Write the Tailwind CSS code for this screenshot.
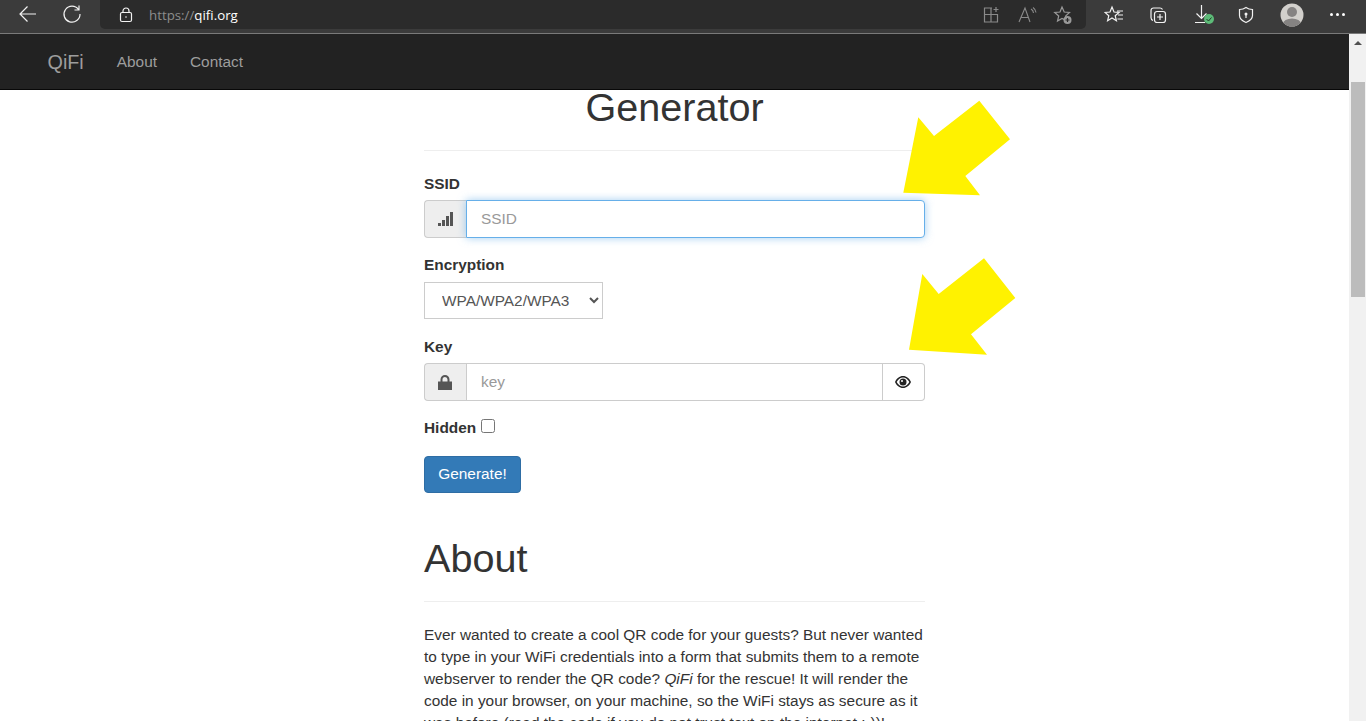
<!DOCTYPE html>
<html lang="en">
<head>
  <meta charset="UTF-8">
  <title>QiFi</title>
  <script src="https://cdn.jsdelivr.net/npm/@tailwindcss/browser@4"></script>
</head>
<body class="h-[721px] w-[1366px] overflow-hidden bg-white font-['Liberation_Sans',Arial,sans-serif] text-[15.4px] leading-[22px] text-[#333]">
  <!-- Browser toolbar -->
  <div class="flex h-[34px] border-b border-[#7a7a7a] bg-[#3b3b3b]">
    <div class="flex h-[33px] w-[100px] shrink-0 items-start">
      <svg class="ml-[18px] mt-[4px] h-[20px] w-[20px]" viewBox="0 0 20 20" fill="none" stroke="#f2f2f2" stroke-width="1.2"><path d="M18 10H2M9.500 2.500L2 10l7.500 7.500"/></svg>
      <svg class="ml-[24px] mt-[4px] h-[20px] w-[20px]" viewBox="0 0 20 20" fill="none" stroke="#f2f2f2" stroke-width="1.200"><path d="M16.500 5.500A8 8 0 1 0 18 10M17 1.500v4.500h-4.500"/></svg>
    </div>
    <!-- Address bar -->
    <div class="flex h-[29px] w-[986px] shrink-0 items-center rounded-b-[5px] bg-[#2b2b2b]">
      <svg class="ml-[18px] h-[16px] w-[16px]" viewBox="0 0 16 16" fill="none" stroke="#f2f2f2" stroke-width="1.200"><rect x="2.500" y="5.500" width="11" height="9" rx="1.500"/><path d="M5 5.500V4a3 3 0 0 1 6 0v1.500"/><circle cx="8" cy="10" r=".8" fill="#f2f2f2" stroke="none"/></svg>
      <span class="ml-[15px] font-['Open_Sans',sans-serif] text-[13.300px] text-[#8d8d8d]">https://<span class="text-white">qifi.org</span></span>
      <div class="ml-auto mr-[13px] flex items-center gap-[16px]">
        <svg class="h-[20px] w-[20px]" viewBox="0 0 20 20" fill="none" stroke="#8a8a8a" stroke-width="1.200"><path d="M11 3H3.500v14h13V9.500H3.500M10 3v14M15 2v5M12.500 4.500h5"/></svg>
        <svg class="h-[20px] w-[20px]" viewBox="0 0 20 20" fill="none" stroke="#8a8a8a" stroke-width="1.100"><path d="M2 17L8 3l5 14M4 12.500h7.500M14 4a5 5 0 0 1 2.500 4M16 2.500a7 7 0 0 1 3 5"/></svg>
        <svg class="h-[20px] w-[20px]" viewBox="0 0 20 20" fill="none" stroke="#9a9a9a" stroke-width="1.200"><path d="M9 2l2.200 5 5.300.5-4 3.600 1 4.500L9 13.500l-4.500 2.600 1.200-5.100-4-3.500 5.300-.5z"/><circle cx="14.500" cy="15" r="4" fill="#9a9a9a" stroke="none"/><path d="M14.500 13v4M12.500 15h4" stroke="#2b2b2b"/></svg>
      </div>
    </div>
    <div class="flex h-[29px] flex-1 items-center">
      <svg class="ml-[18px] h-[20px] w-[20px]" viewBox="0 0 20 20" fill="none" stroke="#f2f2f2" stroke-width="1.200"><path d="M8 2l2 5 5 .4-3.800 3.300 1.200 5L8 13l-4.400 2.700 1.200-5L1 7.400 6 7zM13 6h6M14 10h5M13.500 14H19"/></svg>
      <svg class="ml-[24px] h-[20px] w-[20px]" viewBox="0 0 20 20" fill="none" stroke="#f2f2f2" stroke-width="1.200"><path d="M5 15.500c-1.500-.5-2-1.500-2-3V5.500c0-1.500 1-2.500 2.500-2.500H12c1 0 2 .5 2.500 1.500"/><rect x="6.500" y="6.500" width="11" height="11" rx="2.500"/><path d="M12 9v6M9 12h6"/></svg>
      <div class="relative ml-[26px] h-[22px] w-[20px]">
        <svg class="h-[22px] w-[20px]" viewBox="0 0 20 22" fill="none" stroke="#f2f2f2" stroke-width="1.200"><path d="M7.500 1v13M2.500 9.500l5 5 5-5M1 18.500h10"/></svg>
        <span class="absolute left-[10px] top-[10px] flex h-[10px] w-[10px] items-center justify-center rounded-full bg-[#5dbb78]">
          <svg class="h-[8px] w-[8px]" viewBox="0 0 8 8" fill="none" stroke="#1f3b28" stroke-width="1"><path d="M1.500 4l2 2 3-3.500"/></svg>
        </span>
      </div>
      <svg class="ml-[22px] h-[20px] w-[20px]" viewBox="0 0 20 20" fill="none" stroke="#f2f2f2" stroke-width="1.200"><path d="M10 2.500c2 1.500 4 2 6.500 2v6c0 3.500-3 5.500-6.500 7-3.500-1.500-6.500-3.500-6.500-7v-6c2.500 0 4.500-.5 6.500-2z"/><circle cx="10" cy="9" r="1.500" fill="#f2f2f2" stroke="none"/><path d="M10 10v3"/></svg>
      <svg class="ml-[24px] h-[24px] w-[24px]" viewBox="0 0 24 24"><clipPath id="avatar"><circle cx="12" cy="12" r="11.500"/></clipPath><g clip-path="url(#avatar)"><rect width="24" height="24" fill="#d2d0cc"/><circle cx="12" cy="9" r="5" fill="#858382"/><ellipse cx="12" cy="21" rx="9" ry="5.500" fill="#858382"/></g></svg>
      <div class="ml-[26px] flex gap-[3px]">
        <span class="h-[3px] w-[3px] rounded-full bg-white"></span>
        <span class="h-[3px] w-[3px] rounded-full bg-white"></span>
        <span class="h-[3px] w-[3px] rounded-full bg-white"></span>
      </div>
    </div>
  </div>

  <div class="flex h-[687px]">
    <div class="w-[1349px] shrink-0 overflow-hidden">
      <!-- Navbar -->
      <nav class="flex h-[56px] items-center border-b border-[#080808] bg-[#222] pl-[47.500px] text-[#9d9d9d]">
        <span class="text-[19.800px]">QiFi</span>
        <span class="ml-[33px]">About</span>
        <span class="ml-[33px]">Contact</span>
      </nav>

      <main class="ml-[424px] w-[501px]">
        <h1 class="mt-[-5px] text-center text-[39.600px] leading-[44px]">Generator</h1>
        <hr class="mt-[21px] border-[#eee]">

        <label class="mt-[22px] block font-bold">SSID</label>
        <div class="mt-[5px] flex h-[38px]">
          <div class="flex w-[42px] items-center justify-center rounded-l-[4px] border border-r-0 border-[#ccc] bg-[#eee]">
            <svg class="h-[14px] w-[15px]" viewBox="0 0 15 14" fill="#555"><rect x="0" y="11" width="3" height="3"/><rect x="4" y="8" width="3" height="6"/><rect x="8" y="4" width="3" height="10"/><rect x="12" y="0" width="3" height="14"/></svg>
          </div>
          <input placeholder="SSID" class="min-w-0 flex-1 rounded-r-[4px] border border-[#66afe9] bg-white px-[14px] shadow-[0_0_8px_rgba(102,175,233,0.6)] outline-none placeholder:text-[#999]">
        </div>

        <label class="mt-[16px] block font-bold">Encryption</label>
        <select class="mt-[6px] block h-[37px] w-[179px] border border-[#ccc] bg-white pl-[13px] text-[#555] outline-none">
          <option>WPA/WPA2/WPA3</option>
        </select>

        <label class="mt-[17px] block font-bold">Key</label>
        <div class="mt-[5px] flex h-[38px]">
          <div class="flex w-[42px] items-center justify-center rounded-l-[4px] border border-r-0 border-[#ccc] bg-[#eee] pr-[1px]">
            <svg class="h-[15px] w-[14px]" viewBox="0 0 14 15" fill="#555"><path d="M2.500 6.500V4.500a4.500 4.500 0 0 1 9 0v2H14V15H0V6.500zM4.500 6.500h5v-2a2.500 2.500 0 0 0-5 0z"/></svg>
          </div>
          <input placeholder="key" class="min-w-0 flex-1 border border-[#ccc] bg-white px-[14px] outline-none placeholder:text-[#999]">
          <div class="flex w-[42px] items-center justify-center rounded-r-[4px] border border-l-0 border-[#ccc] pr-[1px]">
            <svg class="h-[12px] w-[16px]" viewBox="0 0 16 12"><path fill="#222" fill-rule="evenodd" d="M8 0c3.500 0 6.500 2.500 8 6-1.500 3.500-4.500 6-8 6S1.500 9.500 0 6c1.500-3.500 4.500-6 8-6zM8 1.500C5.500 1.500 3 3.300 1.700 6 3 8.700 5.500 10.500 8 10.500s5-1.800 6.300-4.500C13 3.300 10.500 1.500 8 1.500z"/><circle cx="8" cy="6" r="3.500" fill="#222"/><circle cx="7" cy="5" r="1" fill="#fff"/></svg>
          </div>
        </div>

        <div class="mt-[16px] flex items-start font-bold">
          <span>Hidden</span>
          <input type="checkbox" class="ml-[5px] mt-[2px] h-[14px] w-[14px]">
        </div>

        <button class="mt-[17px] block h-[37px] w-[97px] rounded-[4px] border border-[#2e6da4] bg-[#337ab7] pb-[2px] text-white">Generate!</button>

        <h1 class="mt-[43px] text-[39.600px] leading-[44px]">About</h1>
        <hr class="mt-[21px] border-[#eee]">
        <p class="mt-[22px]">Ever wanted to create a cool QR code for your guests? But never wanted to type in your WiFi credentials into a form that submits them to a remote webserver to render the QR code? <em>QiFi</em> for the rescue! It will render the code in your browser, on your machine, so the WiFi stays as secure as it was before (read the code if you do not trust text on the internet :-))!</p>
      </main>
    </div>

    <!-- Scrollbar -->
    <div class="flex w-[17px] shrink-0 flex-col items-center bg-[#f1f1f1]">
      <span class="mt-[7px] h-0 w-0 border-x-[4px] border-b-[4px] border-x-transparent border-b-[#505050]"></span>
      <span class="mt-[37px] h-[215px] w-[14px] bg-[#bcbcbc]"></span>
    </div>
  </div>

  <!-- Annotation arrows -->
  <svg class="absolute left-0 top-0" width="1366" height="721" fill="#fff200">
    <polygon points="979.300,100.700 1010,139.300 965.300,176 980,195.300 903.300,192.700 918.300,117.300 934,136"/>
    <polygon points="984,258.300 1015.300,298 971,334.300 987,354.700 909,349.700 922.300,274 938.700,294"/>
  </svg>
</body>
</html>
